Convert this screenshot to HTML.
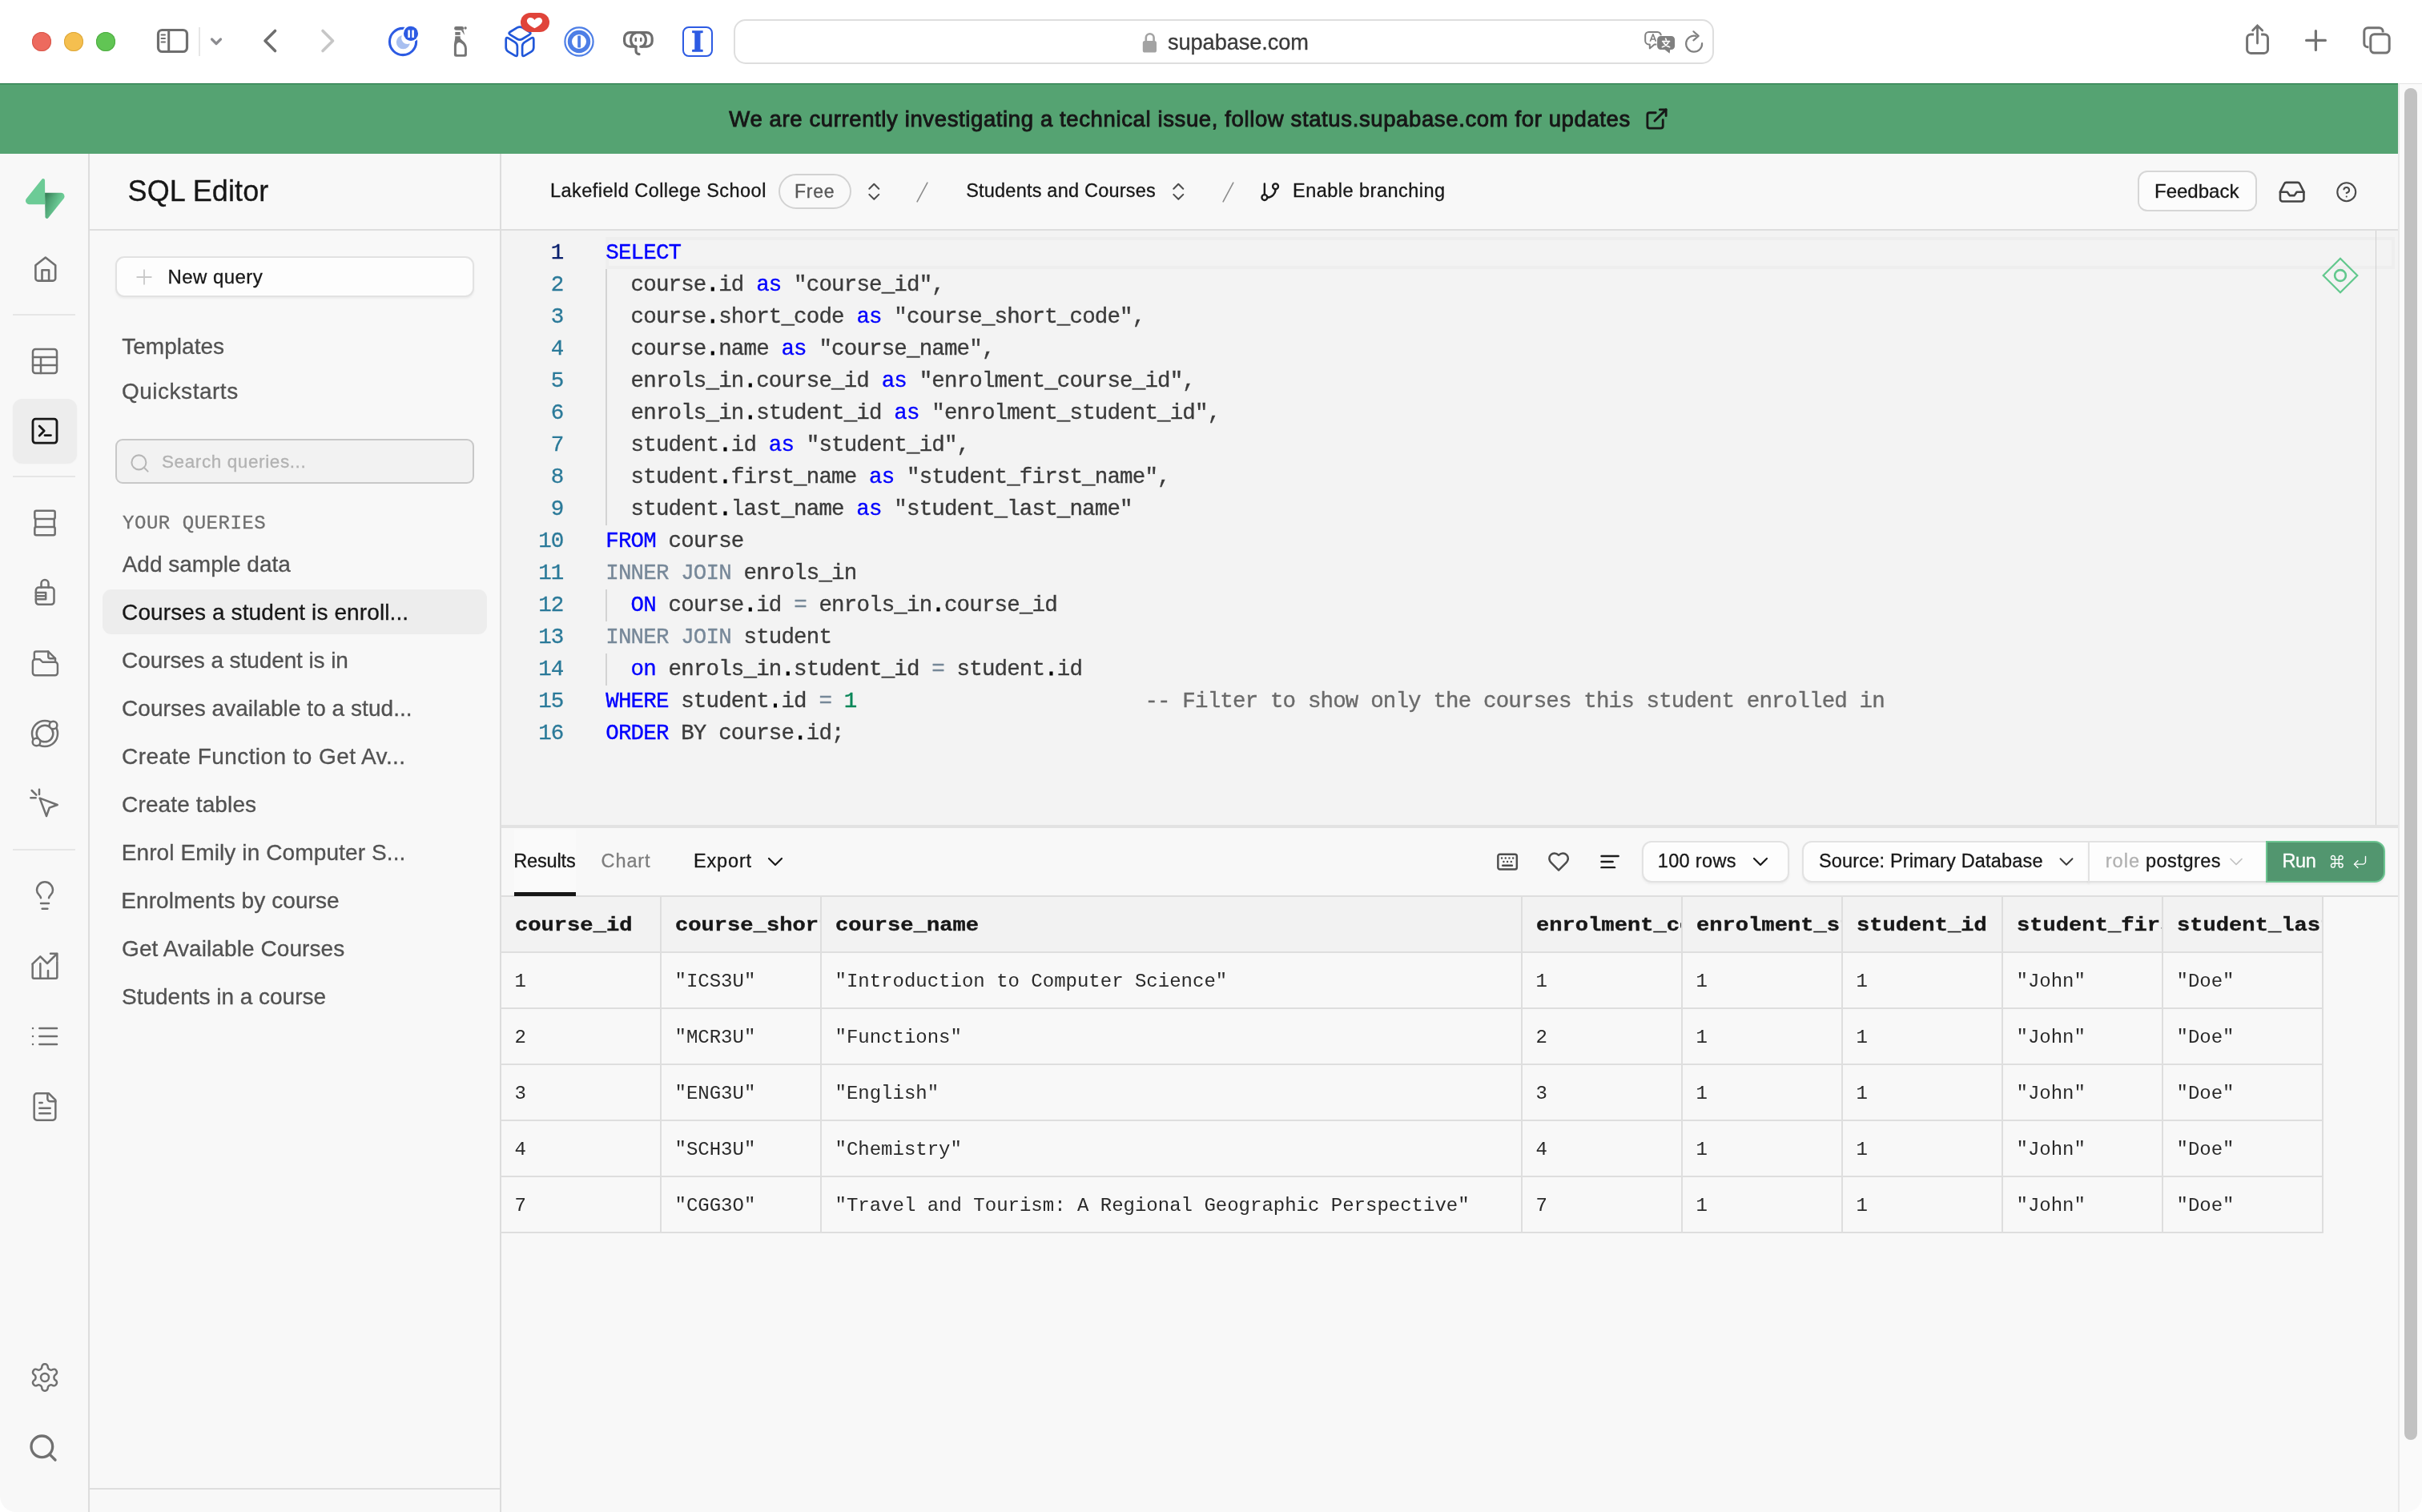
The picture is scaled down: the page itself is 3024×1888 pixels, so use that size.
<!DOCTYPE html>
<html lang="en">
<head>
<meta charset="utf-8">
<title>SQL Editor | Supabase</title>
<style>
*{box-sizing:border-box;margin:0;padding:0}
html,body{width:3024px;height:1888px;overflow:hidden;background:#fff}
body{will-change:transform;position:relative;font-family:"Liberation Sans",sans-serif;color:#171717}
.abs{position:absolute}
.t{position:absolute;white-space:nowrap;line-height:1;-webkit-text-stroke-width:0.3px}
svg{position:absolute;overflow:visible}
.ic{fill:none;stroke:#6f6f6f;stroke-width:1.5;stroke-linecap:round;stroke-linejoin:round}
.tl{position:absolute;top:40px;width:24px;height:24px;border-radius:50%}
.code{position:absolute;left:756.3px;height:40px;line-height:40px;font-family:"Liberation Mono",monospace;font-size:27.5px;letter-spacing:-0.85px;white-space:pre;color:#3b3b3b;-webkit-text-stroke-width:0.35px}
.ln{position:absolute;left:626px;width:77.5px;height:40px;line-height:40px;text-align:right;font-family:"Liberation Mono",monospace;font-size:27.5px;letter-spacing:-0.85px;color:#2b7a99;-webkit-text-stroke-width:0.3px}
.k{color:#0000ff}.g{color:#778899}.d{color:#000;-webkit-text-stroke-width:0.9px}.n{color:#098658}.c{color:#6a6a6a}
.guide{position:absolute;left:756px;width:2px;background:#d3d3d3}
.th{position:absolute;top:1120px;height:68px;background:#f2f2f2;border-right:2px solid #dedede}
.th div{position:absolute;left:0;top:0;right:0;bottom:0;overflow:hidden}
.th span{position:absolute;left:17.300px;top:22px;line-height:27px;font-family:"Liberation Mono",monospace;font-weight:700;font-size:24px;white-space:nowrap;color:#171717;transform:scaleX(1.13);transform-origin:0 0;-webkit-text-stroke-width:0.4px}
.td{position:absolute;height:70px;border-right:2px solid #dedede;border-top:2px solid #dedede;overflow:hidden}
.td span{position:absolute;left:16.5px;top:22px;line-height:27px;font-family:"Liberation Mono",monospace;font-size:24px;white-space:nowrap;color:#2a2a2a}
@media (max-width:2000px){html{zoom:.5}}

</style>
</head>
<body>
<!-- safari chrome -->
<div class="abs" style="left:0px;top:0px;width:3024px;height:104px;background:#fff"></div>
<div class="tl" style="left:40px;background:#ed6a5e;box-shadow:inset 0 0 0 1px #d8574b"></div>
<div class="tl" style="left:80px;background:#f5bf4f;box-shadow:inset 0 0 0 1px #dca73a"></div>
<div class="tl" style="left:120px;background:#61c554;box-shadow:inset 0 0 0 1px #4eac42"></div>
<svg style="left:190px;top:30px;" width="50" height="42" viewBox="0 0 50 42"><rect x="7.500" y="7.500" width="36" height="27" rx="5" fill="none" stroke="#6e6e6e" stroke-width="3.2"/>
<line x1="20.7" y1="7.5" x2="20.7" y2="34.5" stroke="#6e6e6e" stroke-width="3"/>
<g stroke="#6e6e6e" stroke-width="2" stroke-linecap="round"><line x1="11.5" y1="13.6" x2="16" y2="13.6"/><line x1="11.5" y1="18" x2="16" y2="18"/><line x1="11.5" y1="22.5" x2="16" y2="22.5"/></g></svg>
<div class="abs" style="left:248px;top:34px;width:2px;height:36px;background:#e6e6e6"></div>
<svg style="left:258px;top:40px;" width="24" height="24" viewBox="0 0 24 24"><polyline points="6.5,9 12,14.5 17.5,9" fill="none" stroke="#8c8c90" stroke-width="3.2" stroke-linecap="round" stroke-linejoin="round"/></svg>
<svg style="left:320px;top:30px;" width="40" height="44" viewBox="0 0 40 44"><polyline points="23.5,8.5 11,21 23.5,33.5" fill="none" stroke="#6e6e6e" stroke-width="3.6" stroke-linecap="round" stroke-linejoin="round"/></svg>
<svg style="left:392px;top:30px;" width="40" height="44" viewBox="0 0 40 44"><polyline points="11,8.5 23.5,21 11,33.5" fill="none" stroke="#c6c6c6" stroke-width="3.6" stroke-linecap="round" stroke-linejoin="round"/></svg>
<svg style="left:480px;top:28px;" width="48" height="48" viewBox="480 28 48 48"><circle cx="503.050" cy="52" r="16.600" fill="none" stroke="#2d5be3" stroke-width="3.100"/>
<circle cx="503.400" cy="52.600" r="8.600" fill="#a8bff0"/><circle cx="508.600" cy="47.400" r="7.500" fill="#fff"/>
<circle cx="513" cy="41.900" r="10.900" fill="#fff"/>
<circle cx="513" cy="41.900" r="9.050" fill="#2d5be3"/>
<rect x="509.300" y="37.400" width="2.600" height="9.600" rx="0.600" fill="#fff"/><rect x="514.300" y="37.400" width="2.600" height="9.600" rx="0.600" fill="#fff"/></svg>
<svg style="left:560px;top:28px;" width="30" height="48" viewBox="560 28 30 48"><g fill="#767676"><rect x="567.100" y="33.100" width="12" height="4.600" rx="2.300"/><circle cx="581.100" cy="35" r="1.700"/><path d="M575.600 37.500 L578.600 37.500 L580.200 44 Z"/><rect x="568.300" y="39.900" width="6.400" height="3.900"/>
<path fill-rule="evenodd" d="M568.300 45.300 H574.700 V47.300 C575.200 50.600 582.900 52.400 582.900 60.500 V68.400 A2.400 2.400 0 0 1 580.500 70.800 H569.300 A2.400 2.400 0 0 1 566.900 68.400 V58.500 C566.900 52.500 568.300 50.500 568.300 45.300 Z M569.900 58.500 V66.800 A1.300 1.300 0 0 0 571.200 68.100 H578.700 A1.300 1.300 0 0 0 580 66.800 V61 C580 56.500 577 53.700 573.200 53 C571 52.800 569.900 55 569.900 58.500 Z"/></g></svg>
<svg style="left:626px;top:28px;" width="46" height="48" viewBox="626 28 46 48"><path d="M645.91 34.45 Q649.00 32.60 652.09 34.45 L660.91 39.75 Q664.00 41.60 660.91 43.45 L652.09 48.75 Q649.00 50.60 645.91 48.75 L637.09 43.45 Q634.00 41.60 637.09 39.75 Z M631.70 49.40 Q631.70 45.80 634.78 47.66 L642.82 52.54 Q645.90 54.40 645.90 58.00 L645.90 67.60 Q645.90 71.20 642.80 69.37 L634.80 64.63 Q631.70 62.80 631.70 59.20 Z M666.30 49.40 Q666.30 45.80 663.22 47.66 L655.18 52.54 Q652.10 54.40 652.10 58.00 L652.10 67.60 Q652.10 71.20 655.20 69.37 L663.20 64.63 Q666.30 62.80 666.30 59.20 Z" fill="none" stroke="#2157d9" stroke-width="2.700" stroke-linejoin="round"/></svg>
<div class="abs" style="left:650px;top:16px;width:36px;height:24px;background:#e0443a;border-radius:12px"></div>
<svg style="left:654px;top:18px;" width="28" height="20" viewBox="654 18 28 20"><path d="M667.500 35.300 C660.500 31.500 657.900 28.800 657.900 26 C657.900 23.600 659.800 21.900 662.100 21.900 C664.300 21.900 666.300 23 667.500 25 C668.700 23 670.700 21.900 672.900 21.900 C675.200 21.900 677.100 23.600 677.100 26 C677.100 28.800 674.500 31.500 667.500 35.300z" fill="#fff"/></svg>
<svg style="left:702px;top:31px;" width="42" height="42" viewBox="0 0 42 42"><circle cx="21" cy="21" r="17.6" fill="none" stroke="#4d7ee6" stroke-width="2.2"/><circle cx="21" cy="21" r="11.6" fill="#fff" stroke="#4d7ee6" stroke-width="5.2"/><rect x="19.2" y="13.6" width="3.8" height="14.8" rx="1" fill="#4d7ee6"/></svg>
<svg style="left:772px;top:32px;" width="50" height="44" viewBox="772 32 50 44"><g fill="none" stroke="#6e6e6e" stroke-width="3.200" stroke-linecap="round" stroke-linejoin="round"><path d="M794 58.200 H786.400 A6.800 6.800 0 0 1 779.600 51.400 V47.500 A6.800 6.800 0 0 1 786.400 40.700 H807.400 A6.800 6.800 0 0 1 814.200 47.500 V51.400 A6.800 6.800 0 0 1 807.400 58.200 H799.800"/><path d="M793.400 41 C788.800 43 787.400 47 787.600 50.500 C787.900 54 789.600 57 792.600 58.200"/><path d="M800.600 41 C805.200 43 806.600 47 806.400 50.500 C806.100 54 804.400 57 801.400 58.200"/><path d="M794 58.200 V63.400 A4.200 4.200 0 0 0 798 67.600"/></g><rect x="792.500" y="46.800" width="2.500" height="5.300" rx="1.200" fill="#6e6e6e"/><rect x="799" y="46.800" width="2.500" height="5.300" rx="1.200" fill="#6e6e6e"/></svg>
<div class="abs" style="left:852px;top:33px;width:38px;height:38px;border:2.700px solid #2d5be3;border-radius:8px"></div>
<div class="t" style="left:863.6px;top:32.0px;color:#2d5be3;font-size:38px;font-weight:700;font-family:'Liberation Serif',serif;-webkit-text-stroke:1.300px #2d5be3;">I</div>
<div class="abs" style="left:916px;top:24px;width:1224px;height:56px;border:2px solid #dedede;border-radius:15px;background:#fff"></div>
<svg style="left:1420px;top:36px;" width="30" height="34" viewBox="1420 36 30 34"><path d="M1430.800 52 V47.100 A4.900 4.900 0 0 1 1440.600 47.100 V52" fill="none" stroke="#a3a3a3" stroke-width="2.600"/><rect x="1426.800" y="51.100" width="17.200" height="14.500" rx="2.600" fill="#a3a3a3"/></svg>
<div class="t" style="left:1458.0px;top:38.9px;color:#3a3a3a;font-size:27.2px;letter-spacing:-0.08px;">supabase.com</div>
<svg style="left:2048px;top:34px;" width="48" height="38" viewBox="2048 34 48 38"><path d="M2058.600 40 H2069.400 A4.400 4.400 0 0 1 2073.800 44.400 V51 A4.400 4.400 0 0 1 2069.400 55.400 H2065.600 L2059.800 60.400 V55.400 H2058.600 A4.400 4.400 0 0 1 2054.200 51 V44.400 A4.400 4.400 0 0 1 2058.600 40z" fill="none" stroke="#808080" stroke-width="2" stroke-linejoin="round"/>
<path d="M2060.300 51.800 L2063.900 42.800 L2067.500 51.800 M2061.500 49 H2066.300" fill="none" stroke="#808080" stroke-width="1.700" stroke-linejoin="round"/>
<path d="M2073.600 45 H2086.600 A4.500 4.500 0 0 1 2091.100 49.500 V57.600 A4.500 4.500 0 0 1 2086.600 62.100 H2085.300 L2084.600 66.800 L2078.600 62.100 H2073.600 A4.500 4.500 0 0 1 2069.100 57.600 V49.500 A4.500 4.500 0 0 1 2073.600 45z" fill="#808080" stroke="#fff" stroke-width="1.400" paint-order="stroke"/>
<g stroke="#fff" stroke-width="1.700" fill="none" stroke-linecap="round"><path d="M2079.600 48.200 L2080.400 49.800 M2075.700 51.700 H2084.500 M2077.200 53.200 C2078.600 55.600 2081.200 57.600 2084.600 58.700 M2082.900 53.200 C2081.600 55.600 2078.900 57.600 2075.400 58.700"/></g></svg>
<svg style="left:2100px;top:34px;" width="32" height="38" viewBox="2100 34 32 38"><path d="M2117.400 44.900 A10 10 0 1 0 2125.100 54.200" fill="none" stroke="#808080" stroke-width="2.200" stroke-linecap="round"/><polyline points="2114.400,39.300 2120.700,44.900 2114.400,50.300" fill="none" stroke="#808080" stroke-width="2.200" stroke-linecap="round" stroke-linejoin="round"/></svg>
<svg style="left:2798px;top:24px;" width="42" height="50" viewBox="2798 24 42 50"><path d="M2814 42.900 H2810.200 A4.600 4.600 0 0 0 2805.600 47.500 V61.800 A4.600 4.600 0 0 0 2810.200 66.400 H2826.900 A4.600 4.600 0 0 0 2831.500 61.800 V47.500 A4.600 4.600 0 0 0 2826.900 42.900 H2823.100" fill="none" stroke="#737373" stroke-width="3" stroke-linecap="butt"/><path d="M2818.500 54 V32.600 M2812.600 38 L2818.500 32 L2824.700 38" fill="none" stroke="#737373" stroke-width="2.800" stroke-linecap="round" stroke-linejoin="miter"/></svg>
<svg style="left:2872px;top:30px;" width="40" height="40" viewBox="2872 30 40 40"><path d="M2891.400 38.600 V62.400 M2879.600 50.400 H2903.400" stroke="#737373" stroke-width="3.200" stroke-linecap="round"/></svg>
<svg style="left:2944px;top:28px;" width="48" height="46" viewBox="2944 28 48 46"><path d="M2957.400 58.800 H2956.400 A4.600 4.600 0 0 1 2951.800 54.200 V39.400 A4.600 4.600 0 0 1 2956.400 34.800 H2970.600 A4.600 4.600 0 0 1 2975.200 39.400 V40.400" fill="none" stroke="#737373" stroke-width="3"/><rect x="2959.800" y="42.700" width="23.400" height="23.400" rx="4.800" fill="none" stroke="#737373" stroke-width="3"/></svg>
<!-- banner -->
<div class="abs" style="left:0px;top:104px;width:2994px;height:88px;background:#55a372;border-top:1px solid #26794a;box-shadow:inset 0 1px 0 #4b9b69"></div>
<div class="t" style="left:910.3px;top:134.8px;color:#171717;font-size:27.5px;letter-spacing:0.62px;-webkit-text-stroke:0.9px #171717;">We are currently investigating a technical issue, follow status.supabase.com for updates</div>
<svg class="ic" style="left:2052.5px;top:132.5px;stroke:#171717;stroke-width:2.2;" width="31" height="31" viewBox="0 0 24 24"><path d="M15 3h6v6"/><path d="M10 14 21 3"/><path d="M18 13v6a2 2 0 0 1-2 2H5a2 2 0 0 1-2-2V8a2 2 0 0 1 2-2h6"/></svg>
<!-- app -->
<div class="abs" style="left:0px;top:192px;width:2994px;height:1696px;background:#f8f8f8;border-bottom-left-radius:20px"></div>
<div class="abs" style="left:110px;top:192px;width:2px;height:1696px;background:#dddddd"></div>
<div class="abs" style="left:624px;top:192px;width:2px;height:1696px;background:#dddddd"></div>
<div class="abs" style="left:112px;top:286px;width:2882px;height:2px;background:#dedede"></div>
<div class="abs" style="left:2994px;top:104px;width:30px;height:1784px;background:#fafafa;border-left:2px solid #e9e9e9;border-top:1px solid #e4e4e4;border-bottom-right-radius:20px"></div>
<div class="abs" style="left:3002px;top:110px;width:16px;height:1688px;background:#c2c2c2;border-radius:8px"></div>
<!-- rail -->
<svg style="left:31.5px;top:222.5px;" width="48.5" height="50.3" viewBox="0 0 109 113"><defs><linearGradient id="lg0" x1="53.97" y1="54.97" x2="94.16" y2="71.83" gradientUnits="userSpaceOnUse"><stop stop-color="#3f8f63"/><stop offset="1" stop-color="#6ccb96"/></linearGradient>
<linearGradient id="lg1" x1="36.16" y1="30.58" x2="54.48" y2="65.08" gradientUnits="userSpaceOnUse"><stop/><stop offset="1" stop-opacity="0"/></linearGradient></defs>
<path d="M63.7076 110.284C60.8481 113.885 55.0502 111.912 54.9813 107.314L53.9738 40.0627L99.1935 40.0627C107.384 40.0627 111.952 49.5228 106.859 55.9374L63.7076 110.284Z" fill="url(#lg0)"/>
<path d="M63.7076 110.284C60.8481 113.885 55.0502 111.912 54.9813 107.314L53.9738 40.0627L99.1935 40.0627C107.384 40.0627 111.952 49.5228 106.859 55.9374L63.7076 110.284Z" fill="url(#lg1)" fill-opacity="0.2"/>
<path d="M45.317 2.07103C48.1765 -1.53037 53.9745 0.442937 54.0434 5.041L54.4849 72.2922H9.83113C1.64038 72.2922 -2.92775 62.8321 2.1655 56.4175L45.317 2.07103Z" fill="#6ccb96"/></svg>
<svg style="left:36px;top:312px;" width="42" height="48" viewBox="36 312 42 48"><path d="M44.400 331.200 L56.800 321.500 L69.200 331.200 V347.400 A3.200 3.200 0 0 1 66 350.600 H47.600 A3.200 3.200 0 0 1 44.400 347.400 Z M52.500 350.600 V337.200 H61.100 V350.600" fill="none" stroke="#707070" stroke-width="2.600" stroke-linejoin="round" stroke-linecap="round"/></svg>
<div class="abs" style="left:16px;top:391.5px;width:78px;height:2.0px;background:#e6e6e6"></div>
<svg class="ic" style="left:36.0px;top:430.7px;stroke:#707070;stroke-width:1.5;" width="40" height="40" viewBox="0 0 24 24"><rect x="3" y="3" width="18" height="18" rx="2"/><path d="M3 9h18M3 15h18M9 9v12"/></svg>
<div class="abs" style="left:16px;top:498px;width:80px;height:80px;background:#ededed;border-radius:12px;box-shadow:0 1px 2px rgba(0,0,0,.06)"></div>
<svg class="ic" style="left:36.0px;top:518.0px;stroke:#171717;stroke-width:1.7;" width="40" height="40" viewBox="0 0 24 24"><path d="M7.9 8.43 11.5 12.04 7.9 15.64M12 15.33H16.5M5 21.1H19C20.1 21.1 21 20.2 21 19.1V5.1C21 4 20.1 3.1 19 3.1H5C3.9 3.1 3 4 3 5.1V19.1C3 20.2 3.9 21.1 5 21.1Z"/></svg>
<div class="abs" style="left:16px;top:594px;width:78px;height:2px;background:#e6e6e6"></div>
<svg class="ic" style="left:36.0px;top:633.0px;stroke:#707070;stroke-width:1.5;" width="40" height="40" viewBox="0 0 24 24"><rect x="4.400" y="2.900" width="15.200" height="6.100" rx="1.200"/><rect x="4.400" y="15" width="15.200" height="6.100" rx="1.200"/><path d="M5 9v6M19 9v6"/></svg>
<svg class="ic" style="left:36.0px;top:719.0px;stroke:#707070;stroke-width:1.5;" width="40" height="40" viewBox="0 0 24 24"><rect x="5.300" y="8.700" width="13.600" height="12.800" rx="2.200"/><path d="M9.300 8.700V5.700a2.700 2.700 0 0 1 5.400 0v3"/><path d="M5.300 12.600h7.400v5H5.300M5.300 15.100h7.400"/></svg>
<svg class="ic" style="left:36.6px;top:808.2px;stroke:#707070;stroke-width:1.5;" width="38.8" height="38.8" viewBox="0 0 24 24"><path d="M3.600 9.400V4.800a1.400 1.400 0 0 1 1.400-1.400h9.400l5.400 5.400v2.200"/><path d="M14.400 3.400v4a1.400 1.400 0 0 0 1.400 1.400h4"/><path d="M2.400 11.400a2 2 0 0 1 2-2h3.400l2.200 2.200h9.600a2 2 0 0 1 2 2v6.200a2 2 0 0 1-2 2H4.400a2 2 0 0 1-2-2z"/></svg>
<svg class="ic" style="left:36.0px;top:896.0px;stroke:#707070;stroke-width:1.5;" width="40" height="40" viewBox="0 0 24 24"><circle cx="12" cy="12" r="9.6"/><circle cx="12" cy="12" r="6.200"/><circle cx="18.300" cy="5.700" r="2.900" fill="#f8f8f8"/><circle cx="5.700" cy="18.300" r="2.900" fill="#f8f8f8"/></svg>
<svg class="ic" style="left:35.5px;top:983.0px;stroke:#707070;stroke-width:1.5;" width="40" height="40" viewBox="0 0 24 24"><path d="M8.200 8.200 21.400 13.200 15.400 15.400 13.200 21.600z"/><path d="M7.800 1.600v3.800M1.400 8h3.800M2.200 2.400l3.400 3.400"/></svg>
<div class="abs" style="left:16px;top:1060px;width:78px;height:2px;background:#e6e6e6"></div>
<svg class="ic" style="left:36.0px;top:1098.0px;stroke:#707070;stroke-width:1.5;" width="40" height="40" viewBox="0 0 24 24"><path d="M15 14c.2-1 .7-1.700 1.500-2.500 1-.9 1.500-2.200 1.500-3.500A6 6 0 0 0 6 8c0 1 .2 2.200 1.500 3.500.7.700 1.300 1.500 1.500 2.500"/><path d="M9 18h6"/><path d="M10 22h4"/></svg>
<svg class="ic" style="left:36.0px;top:1186.0px;stroke:#707070;stroke-width:1.5;" width="40" height="40" viewBox="0 0 24 24"><path d="M2.800 10.600V20.400a1 1 0 0 0 1 1H20.200a1 1 0 0 0 1-1V9"/><path d="M2.800 10.600 8.600 5 13.800 10.200 21 3"/><path d="M16.200 2.800H21.200V7.800"/><path d="M8.600 10.400V21.400M14.400 15.600V21.400"/></svg>
<svg class="ic" style="left:36.0px;top:1274.0px;stroke:#707070;stroke-width:1.5;" width="40" height="40" viewBox="0 0 24 24"><path d="M3 12h.01"/><path d="M3 18h.01"/><path d="M3 6h.01"/><path d="M8 12h13"/><path d="M8 18h13"/><path d="M8 6h13"/></svg>
<svg class="ic" style="left:36.0px;top:1362.0px;stroke:#707070;stroke-width:1.5;" width="40" height="40" viewBox="0 0 24 24"><path d="M15 2H6a2 2 0 0 0-2 2v16a2 2 0 0 0 2 2h12a2 2 0 0 0 2-2V7Z"/><path d="M14 2v4a2 2 0 0 0 2 2h4"/><path d="M10 9H8"/><path d="M16 13H8"/><path d="M16 17H8"/></svg>
<svg class="ic" style="left:36.0px;top:1700.0px;stroke:#707070;stroke-width:1.5;" width="40" height="40" viewBox="0 0 24 24"><path d="M12.220 2h-.440a2 2 0 0 0-2 2v.180a2 2 0 0 1-1 1.730l-.430.250a2 2 0 0 1-2 0l-.150-.080a2 2 0 0 0-2.730.730l-.220.380a2 2 0 0 0 .730 2.730l.150.100a2 2 0 0 1 1 1.720v.510a2 2 0 0 1-1 1.740l-.150.090a2 2 0 0 0-.730 2.730l.220.380a2 2 0 0 0 2.730.730l.150-.080a2 2 0 0 1 2 0l.430.250a2 2 0 0 1 1 1.730V20a2 2 0 0 0 2 2h.440a2 2 0 0 0 2-2v-.180a2 2 0 0 1 1-1.730l.430-.250a2 2 0 0 1 2 0l.150.080a2 2 0 0 0 2.730-.730l.220-.390a2 2 0 0 0-.730-2.730l-.150-.080a2 2 0 0 1-1-1.740v-.500a2 2 0 0 1 1-1.740l.150-.090a2 2 0 0 0 .730-2.730l-.220-.380a2 2 0 0 0-2.730-.730l-.150.080a2 2 0 0 1-2 0l-.430-.250a2 2 0 0 1-1-1.730V4a2 2 0 0 0-2-2z"/><circle cx="12" cy="12" r="3"/></svg>
<svg class="ic" style="left:34.0px;top:1788.0px;stroke:#707070;stroke-width:2;" width="40" height="40" viewBox="0 0 24 24"><circle cx="11" cy="11" r="8"/><path d="m21 21-4.300-4.300"/></svg>
<!-- sidebar -->
<div class="t" style="left:159.6px;top:220.5px;color:#171717;font-size:36px;letter-spacing:0.11px;">SQL Editor</div>
<div class="abs" style="left:144px;top:320px;width:448px;height:51px;background:#fdfdfd;border:2px solid #e2e2e2;border-radius:11px;box-shadow:0 2px 3px rgba(0,0,0,.05)"></div>
<svg style="left:170px;top:336px;" width="20" height="20" viewBox="0 0 20 20"><path d="M10 1.200V18.800M1.200 10H18.800" stroke="#c9c9c9" stroke-width="1.800" stroke-linecap="round"/></svg>
<div class="t" style="left:209.5px;top:333.5px;color:#171717;font-size:24px;letter-spacing:0.45px;">New query</div>
<div class="t" style="left:152.2px;top:418.5px;color:#525252;font-size:28px;letter-spacing:0.03px;">Templates</div>
<div class="t" style="left:152.0px;top:474.5px;color:#525252;font-size:28px;letter-spacing:0.51px;">Quickstarts</div>
<div class="abs" style="left:144px;top:548px;width:448px;height:56px;background:#f2f2f2;border:2px solid #c8c8c8;border-radius:9px"></div>
<svg class="ic" style="left:161.0px;top:565.0px;stroke:#b6b6b6;stroke-width:1.8;" width="27" height="27" viewBox="0 0 24 24"><circle cx="11" cy="11" r="8"/><path d="m21 21-4.300-4.300"/></svg>
<div class="t" style="left:202.0px;top:566.2px;color:#b2b2b2;font-size:22.5px;letter-spacing:0.60px;">Search queries...</div>
<div class="t" style="left:153.1px;top:641.5px;color:#6f6f6f;font-size:24px;letter-spacing:0.52px;font-family:'Liberation Mono',monospace;">YOUR QUERIES</div>
<div class="abs" style="left:128px;top:736px;width:480px;height:56px;background:#ededed;border-radius:11px"></div>
<div class="t" style="left:152.7px;top:690.5px;color:#525252;font-size:28px;">Add sample data</div>
<div class="t" style="left:152.1px;top:750.5px;color:#171717;font-size:28px;letter-spacing:0.11px;">Courses a student is enroll...</div>
<div class="t" style="left:152.1px;top:810.5px;color:#525252;font-size:28px;letter-spacing:-0.09px;">Courses a student is in</div>
<div class="t" style="left:152.1px;top:870.5px;color:#525252;font-size:28px;letter-spacing:0.05px;">Courses available to a stud...</div>
<div class="t" style="left:152.1px;top:930.5px;color:#525252;font-size:28px;letter-spacing:0.41px;">Create Function to Get Av...</div>
<div class="t" style="left:152.1px;top:990.5px;color:#525252;font-size:28px;letter-spacing:0.12px;">Create tables</div>
<div class="t" style="left:151.7px;top:1050.5px;color:#525252;font-size:28px;letter-spacing:0.11px;">Enrol Emily in Computer S...</div>
<div class="t" style="left:151.3px;top:1110.5px;color:#525252;font-size:28px;letter-spacing:0.08px;">Enrolments by course</div>
<div class="t" style="left:152.1px;top:1170.5px;color:#525252;font-size:28px;letter-spacing:0.08px;">Get Available Courses</div>
<div class="t" style="left:152.1px;top:1230.5px;color:#525252;font-size:28px;letter-spacing:-0.02px;">Students in a course</div>
<div class="abs" style="left:112px;top:1858px;width:512px;height:2px;background:#dedede"></div>
<!-- main header -->
<div class="t" style="left:686.9px;top:227.2px;color:#171717;font-size:23.5px;letter-spacing:0.47px;">Lakefield College School</div>
<div class="abs" style="left:972px;top:217px;width:90.5px;height:43.5px;border:2px solid #d2d2d2;border-radius:22px;background:#f9f9f9"></div>
<div class="t" style="left:992.0px;top:227.5px;color:#585858;font-size:23px;letter-spacing:0.73px;">Free</div>
<svg class="ic" style="left:1076.7px;top:224.8px;stroke:#4d4d4d;stroke-width:1.75;" width="28.6" height="28.6" viewBox="0 0 24 24"><path d="m7 15 5 5 5-5"/><path d="m7 9 5-5 5 5"/></svg>
<svg style="left:1140px;top:224px;" width="22" height="32" viewBox="1140 224 22 32"><line x1="1157.900" y1="228.200" x2="1145.100" y2="251.900" stroke="#8c8c8c" stroke-width="1.600" stroke-linecap="round"/></svg>
<div class="t" style="left:1206.2px;top:227.2px;color:#171717;font-size:23.5px;letter-spacing:0.21px;">Students and Courses</div>
<svg class="ic" style="left:1456.7px;top:224.8px;stroke:#4d4d4d;stroke-width:1.75;" width="28.6" height="28.6" viewBox="0 0 24 24"><path d="m7 15 5 5 5-5"/><path d="m7 9 5-5 5 5"/></svg>
<svg style="left:1522px;top:224px;" width="22" height="32" viewBox="1522 224 22 32"><line x1="1539.800" y1="228.200" x2="1527.100" y2="251.900" stroke="#8c8c8c" stroke-width="1.600" stroke-linecap="round"/></svg>
<svg class="ic" style="left:1572.2px;top:226.2px;stroke:#1c1c1c;stroke-width:2.1;" width="27.4" height="27.4" viewBox="0 0 24 24"><line x1="6" x2="6" y1="3" y2="15"/><circle cx="18" cy="6" r="3"/><circle cx="6" cy="18" r="3"/><path d="M18 9a9 9 0 0 1-9 9"/></svg>
<div class="t" style="left:1614.0px;top:227.2px;color:#171717;font-size:23.5px;letter-spacing:0.48px;">Enable branching</div>
<div class="abs" style="left:2669px;top:213px;width:148.5px;height:51px;border:2px solid #d6d6d6;border-radius:12px;background:#fcfcfc"></div>
<div class="t" style="left:2690.0px;top:226.5px;color:#171717;font-size:24px;">Feedback</div>
<svg class="ic" style="left:2844.3px;top:222.2px;stroke:#444444;stroke-width:1.76;" width="35.4" height="35.4" viewBox="0 0 24 24"><polyline points="22 12 16 12 14 15 10 15 8 12 2 12"/><path d="M5.450 5.110 2 12v6a2 2 0 0 0 2 2h16a2 2 0 0 0 2-2v-6l-3.450-6.890A2 2 0 0 0 16.760 4H7.240a2 2 0 0 0-1.790 1.110z"/></svg>
<svg class="ic" style="left:2916.3px;top:226.2px;stroke:#4a4a4a;stroke-width:1.83;" width="27.5" height="27.5" viewBox="0 0 24 24"><circle cx="12" cy="12" r="10"/><path d="M9.090 9a3 3 0 0 1 5.830 1c0 2-3 3-3 3"/><path d="M12 17h.010"/></svg>
<!-- editor -->
<div class="abs" style="left:626px;top:288px;width:2368px;height:742px;background:#f3f3f3"></div>
<div class="abs" style="left:756px;top:296px;width:2234px;height:40px;border:4px solid #eeeeee"></div>
<div class="abs" style="left:2966px;top:288px;width:1px;height:742px;background:#cfcfcf"></div>
<div class="ln" style="top:296px;color:#0b216f">1</div><div class="code" style="top:296px"><span class="k">SELECT</span></div>
<div class="ln" style="top:336px;color:#2b7a99">2</div><div class="code" style="top:336px">  course<span class="d">.</span>id <span class="k">as</span> "course_id",</div>
<div class="ln" style="top:376px;color:#2b7a99">3</div><div class="code" style="top:376px">  course<span class="d">.</span>short_code <span class="k">as</span> "course_short_code",</div>
<div class="ln" style="top:416px;color:#2b7a99">4</div><div class="code" style="top:416px">  course<span class="d">.</span>name <span class="k">as</span> "course_name",</div>
<div class="ln" style="top:456px;color:#2b7a99">5</div><div class="code" style="top:456px">  enrols_in<span class="d">.</span>course_id <span class="k">as</span> "enrolment_course_id",</div>
<div class="ln" style="top:496px;color:#2b7a99">6</div><div class="code" style="top:496px">  enrols_in<span class="d">.</span>student_id <span class="k">as</span> "enrolment_student_id",</div>
<div class="ln" style="top:536px;color:#2b7a99">7</div><div class="code" style="top:536px">  student<span class="d">.</span>id <span class="k">as</span> "student_id",</div>
<div class="ln" style="top:576px;color:#2b7a99">8</div><div class="code" style="top:576px">  student<span class="d">.</span>first_name <span class="k">as</span> "student_first_name",</div>
<div class="ln" style="top:616px;color:#2b7a99">9</div><div class="code" style="top:616px">  student<span class="d">.</span>last_name <span class="k">as</span> "student_last_name"</div>
<div class="ln" style="top:656px;color:#2b7a99">10</div><div class="code" style="top:656px"><span class="k">FROM</span> course</div>
<div class="ln" style="top:696px;color:#2b7a99">11</div><div class="code" style="top:696px"><span class="g">INNER JOIN</span> enrols_in</div>
<div class="ln" style="top:736px;color:#2b7a99">12</div><div class="code" style="top:736px">  <span class="k">ON</span> course<span class="d">.</span>id <span class="g">=</span> enrols_in<span class="d">.</span>course_id</div>
<div class="ln" style="top:776px;color:#2b7a99">13</div><div class="code" style="top:776px"><span class="g">INNER JOIN</span> student</div>
<div class="ln" style="top:816px;color:#2b7a99">14</div><div class="code" style="top:816px">  <span class="k">on</span> enrols_in<span class="d">.</span>student_id <span class="g">=</span> student<span class="d">.</span>id</div>
<div class="ln" style="top:856px;color:#2b7a99">15</div><div class="code" style="top:856px"><span class="k">WHERE</span> student<span class="d">.</span>id <span class="g">=</span> <span class="n">1</span>                       <span class="c">-- Filter to show only the courses this student enrolled in</span></div>
<div class="ln" style="top:896px;color:#2b7a99">16</div><div class="code" style="top:896px"><span class="k">ORDER</span> BY course<span class="d">.</span>id;</div>
<div class="guide" style="top:336px;height:320px"></div>
<div class="guide" style="top:736px;height:40px"></div>
<div class="guide" style="top:816px;height:40px"></div>
<svg style="left:2896px;top:318px;" width="52" height="52" viewBox="0 0 52 52"><path d="M26 4.700 47.300 26 26 47.300 4.700 26z" fill="none" stroke="#62c88d" stroke-width="2.200" stroke-linejoin="miter"/><circle cx="26" cy="26" r="6.900" fill="none" stroke="#62c88d" stroke-width="2.600"/></svg>
<!-- results toolbar -->
<div class="abs" style="left:626px;top:1030px;width:2368px;height:4px;background:#e2e2e2"></div>
<div class="abs" style="left:626px;top:1118px;width:2368px;height:2px;background:#dedede"></div>
<div class="abs" style="left:642px;top:1036px;width:77px;height:78px;background:#fafafa"></div>
<div class="t" style="left:641.3px;top:1064.2px;color:#171717;font-size:23.5px;letter-spacing:-0.17px;">Results</div>
<div class="abs" style="left:642px;top:1114px;width:77px;height:4.5px;background:#171717"></div>
<div class="t" style="left:750.6px;top:1064.2px;color:#7e7e7e;font-size:23.5px;letter-spacing:0.88px;">Chart</div>
<div class="t" style="left:865.9px;top:1064.2px;color:#171717;font-size:23.5px;letter-spacing:0.86px;">Export</div>
<svg class="ic" style="left:952.1px;top:1060.4px;stroke:#171717;stroke-width:1.6;" width="32" height="32" viewBox="0 0 24 24"><path d="m6 9 6 6 6-6"/></svg>
<svg class="ic" style="left:1867.9px;top:1061.9px;stroke:#4d4d4d;stroke-width:2.1;" width="28.2" height="28.2" viewBox="0 0 24 24"><rect width="20" height="16" x="2" y="4" rx="2"/><path d="M6 8h.010M10 8h.010M14 8h.010M18 8h.010M8 12h.010M12 12h.010M16 12h.010M7 16h10"/></svg>
<svg class="ic" style="left:1931.9px;top:1061.8px;stroke:#4d4d4d;stroke-width:2.1;" width="28.2" height="28.2" viewBox="0 0 24 24"><path d="M19 14c1.490-1.460 3-3.210 3-5.500A5.500 5.500 0 0 0 16.500 3c-1.760 0-3 .5-4.500 2-1.500-1.500-2.740-2-4.500-2A5.500 5.500 0 0 0 2 8.500c0 2.300 1.500 4.050 3 5.500l7 7Z"/></svg>
<svg class="ic" style="left:1995.9px;top:1061.9px;stroke:#1c1c1c;stroke-width:2.1;" width="28.2" height="28.2" viewBox="0 0 24 24"><line x1="21" x2="3" y1="6" y2="6"/><line x1="15" x2="3" y1="12" y2="12"/><line x1="17" x2="3" y1="18" y2="18"/></svg>
<div class="abs" style="left:2050px;top:1050px;width:183.5px;height:51.5px;background:#fdfdfd;border:2px solid #e2e2e2;box-shadow:0 2px 3px rgba(0,0,0,.05);border-radius:12px"></div>
<div class="t" style="left:2069.8px;top:1064.2px;color:#171717;font-size:23.5px;letter-spacing:0.33px;">100 rows</div>
<svg class="ic" style="left:2182.4px;top:1060.4px;stroke:#171717;stroke-width:1.6;" width="32" height="32" viewBox="0 0 24 24"><path d="m6 9 6 6 6-6"/></svg>
<div class="abs" style="left:2250px;top:1050px;width:359px;height:51.5px;background:#fdfdfd;border:2px solid #e2e2e2;box-shadow:0 2px 3px rgba(0,0,0,.05);border-radius:12px 0 0 12px"></div>
<div class="t" style="left:2271.0px;top:1064.2px;color:#171717;font-size:23.5px;letter-spacing:0.17px;">Source: Primary Database</div>
<svg class="ic" style="left:2564.7px;top:1061.4px;stroke:#3a3a3a;stroke-width:1.5;" width="30" height="30" viewBox="0 0 24 24"><path d="m6 9 6 6 6-6"/></svg>
<div class="abs" style="left:2607px;top:1050px;width:224px;height:51.5px;background:#fdfdfd;border:2px solid #e2e2e2;box-shadow:0 2px 3px rgba(0,0,0,.05);"></div>
<div class="t" style="left:2628.8px;top:1064.2px;color:#b0b0b0;font-size:23.5px;letter-spacing:1.00px;">role</div>
<div class="t" style="left:2679.0px;top:1064.2px;color:#171717;font-size:23.5px;letter-spacing:0.49px;">postgres</div>
<svg class="ic" style="left:2777.8px;top:1062.4px;stroke:#c2c2c2;stroke-width:1.5;" width="28" height="28" viewBox="0 0 24 24"><path d="m6 9 6 6 6-6"/></svg>
<div class="abs" style="left:2829px;top:1050px;width:149px;height:52px;background:#52966f;border:2px solid #6cc591;border-radius:0 13px 13px 0;box-shadow:0 2px 3px rgba(0,0,0,.06)"></div>
<div class="t" style="left:2849.4px;top:1064.2px;color:#ffffff;font-size:23.5px;letter-spacing:-0.40px;">Run</div>
<svg class="ic" style="left:2908.1px;top:1066.4px;stroke:#ffffff;stroke-width:1.7;" width="19.6" height="19.6" viewBox="0 0 24 24"><path d="M15 6v12a3 3 0 1 0 3-3H6a3 3 0 1 0 3 3V6a3 3 0 1 0-3 3h12a3 3 0 1 0-3-3"/></svg>
<svg class="ic" style="left:2935.7px;top:1065.5px;stroke:#ffffff;stroke-width:1.6;" width="21" height="21" viewBox="0 0 24 24"><polyline points="9 10 4 15 9 20"/><path d="M20 4v7a4 4 0 0 1-4 4H4"/></svg>
<!-- table -->
<div class="th" style="left:626px;width:200px"><div><span>course_id</span></div></div>
<div class="th" style="left:826px;width:200px"><div><span>course_short_code</span></div></div>
<div class="th" style="left:1026px;width:875px"><div><span>course_name</span></div></div>
<div class="th" style="left:1901px;width:200px"><div><span>enrolment_course_id</span></div></div>
<div class="th" style="left:2101px;width:200px"><div><span>enrolment_student_id</span></div></div>
<div class="th" style="left:2301px;width:200px"><div><span>student_id</span></div></div>
<div class="th" style="left:2501px;width:200px"><div><span>student_first_name</span></div></div>
<div class="th" style="left:2701px;width:200px"><div><span>student_last_name</span></div></div>
<div class="td" style="left:626px;top:1188px;width:200px"><span>1</span></div>
<div class="td" style="left:826px;top:1188px;width:200px"><span>"ICS3U"</span></div>
<div class="td" style="left:1026px;top:1188px;width:875px"><span>"Introduction to Computer Science"</span></div>
<div class="td" style="left:1901px;top:1188px;width:200px"><span>1</span></div>
<div class="td" style="left:2101px;top:1188px;width:200px"><span>1</span></div>
<div class="td" style="left:2301px;top:1188px;width:200px"><span>1</span></div>
<div class="td" style="left:2501px;top:1188px;width:200px"><span>"John"</span></div>
<div class="td" style="left:2701px;top:1188px;width:200px"><span>"Doe"</span></div>
<div class="td" style="left:626px;top:1258px;width:200px"><span>2</span></div>
<div class="td" style="left:826px;top:1258px;width:200px"><span>"MCR3U"</span></div>
<div class="td" style="left:1026px;top:1258px;width:875px"><span>"Functions"</span></div>
<div class="td" style="left:1901px;top:1258px;width:200px"><span>2</span></div>
<div class="td" style="left:2101px;top:1258px;width:200px"><span>1</span></div>
<div class="td" style="left:2301px;top:1258px;width:200px"><span>1</span></div>
<div class="td" style="left:2501px;top:1258px;width:200px"><span>"John"</span></div>
<div class="td" style="left:2701px;top:1258px;width:200px"><span>"Doe"</span></div>
<div class="td" style="left:626px;top:1328px;width:200px"><span>3</span></div>
<div class="td" style="left:826px;top:1328px;width:200px"><span>"ENG3U"</span></div>
<div class="td" style="left:1026px;top:1328px;width:875px"><span>"English"</span></div>
<div class="td" style="left:1901px;top:1328px;width:200px"><span>3</span></div>
<div class="td" style="left:2101px;top:1328px;width:200px"><span>1</span></div>
<div class="td" style="left:2301px;top:1328px;width:200px"><span>1</span></div>
<div class="td" style="left:2501px;top:1328px;width:200px"><span>"John"</span></div>
<div class="td" style="left:2701px;top:1328px;width:200px"><span>"Doe"</span></div>
<div class="td" style="left:626px;top:1398px;width:200px"><span>4</span></div>
<div class="td" style="left:826px;top:1398px;width:200px"><span>"SCH3U"</span></div>
<div class="td" style="left:1026px;top:1398px;width:875px"><span>"Chemistry"</span></div>
<div class="td" style="left:1901px;top:1398px;width:200px"><span>4</span></div>
<div class="td" style="left:2101px;top:1398px;width:200px"><span>1</span></div>
<div class="td" style="left:2301px;top:1398px;width:200px"><span>1</span></div>
<div class="td" style="left:2501px;top:1398px;width:200px"><span>"John"</span></div>
<div class="td" style="left:2701px;top:1398px;width:200px"><span>"Doe"</span></div>
<div class="td" style="left:626px;top:1468px;width:200px"><span>7</span></div>
<div class="td" style="left:826px;top:1468px;width:200px"><span>"CGG3O"</span></div>
<div class="td" style="left:1026px;top:1468px;width:875px"><span>"Travel and Tourism: A Regional Geographic Perspective"</span></div>
<div class="td" style="left:1901px;top:1468px;width:200px"><span>7</span></div>
<div class="td" style="left:2101px;top:1468px;width:200px"><span>1</span></div>
<div class="td" style="left:2301px;top:1468px;width:200px"><span>1</span></div>
<div class="td" style="left:2501px;top:1468px;width:200px"><span>"John"</span></div>
<div class="td" style="left:2701px;top:1468px;width:200px"><span>"Doe"</span></div>
<div class="abs" style="left:626px;top:1538px;width:2275px;height:2px;background:#dedede"></div>
</body>
</html>
